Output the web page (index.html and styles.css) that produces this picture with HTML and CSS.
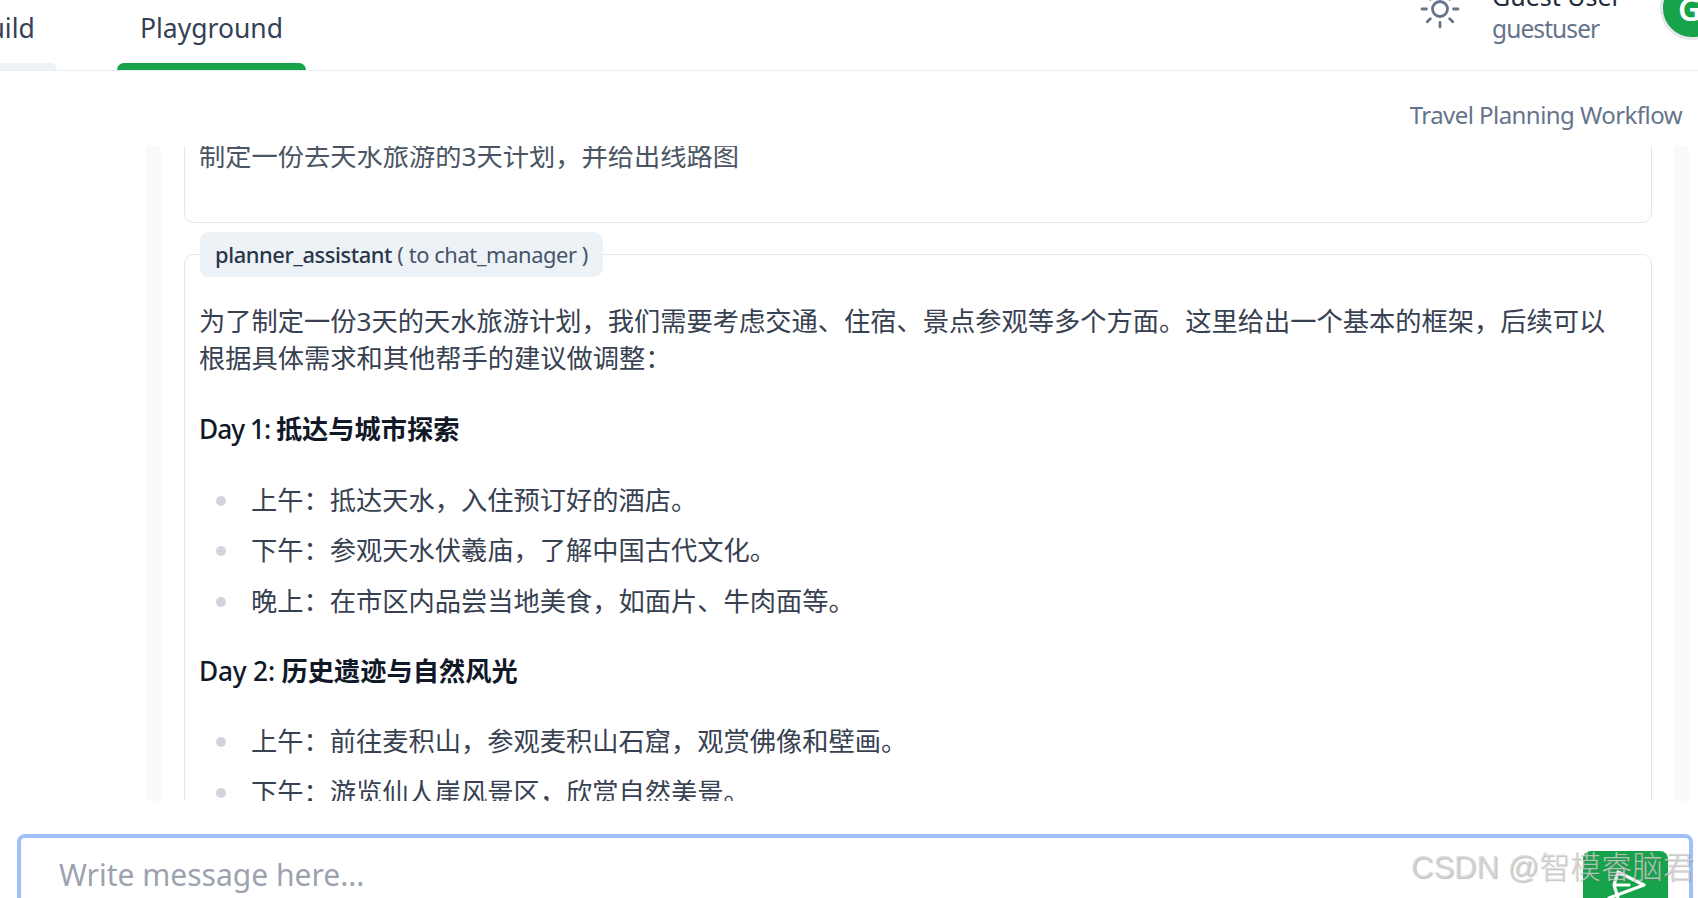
FILE: index.html
```html
<!DOCTYPE html>
<html lang="zh">
<head>
<meta charset="utf-8">
<title>Playground</title>
<link rel="stylesheet" href="styles.css">
</head>
<body>
<div class="page">
  <header class="topbar">
    <nav class="tabs">
      <div class="tab build"><span class="tab-label">Build</span><span class="tab-bar"></span></div>
      <div class="tab active"><span class="tab-label">Playground</span><span class="tab-bar"></span></div>
    </nav>
    <div class="account">
      <svg class="sun" viewBox="0 0 40 40" fill="none" stroke="#64748b" stroke-width="2.8" stroke-linecap="round">
        <circle cx="20" cy="20" r="7.5"/>
        <path d="M20 2v4.5M20 33.5V38M2 20h4.5M33.5 20H38M7.3 7.3l3 3M29.7 29.7l3 3M7.3 32.7l3-3M29.7 10.3l3-3"/>
      </svg>
      <div class="user">
        <div class="user-name">Guest User</div>
        <div class="user-handle">guestuser</div>
      </div>
      <div class="avatar">G</div>
    </div>
  </header>

  <div class="title-row">Travel Planning Workflow</div>

  <section class="chat">
    <div class="chat-inner">
      <div class="card card-user">
        <p>制定一份去天水旅游的3天计划&#xFF0C;并给出线路图</p>
      </div>
      <article class="message">
        <div class="sender"><b>planner_assistant</b> ( to chat_manager )</div>
        <div class="card card-reply">
          <p>为了制定一份3天的天水旅游计划&#xFF0C;我们需要考虑交通、住宿、景点参观等多个方面。这里给出一个基本的框架&#xFF0C;后续可以根据具体需求和其他帮手的建议做调整&#xFF1A;</p>
          <h4><span class="day day-one">Day 1: </span><strong>抵达与城市探索</strong></h4>
          <ul>
            <li>上午&#xFF1A;抵达天水&#xFF0C;入住预订好的酒店。</li>
            <li>下午&#xFF1A;参观天水伏羲庙&#xFF0C;了解中国古代文化。</li>
            <li>晚上&#xFF1A;在市区内品尝当地美食&#xFF0C;如面片、牛肉面等。</li>
          </ul>
          <h4><span class="day day-two">Day 2: </span><strong>历史遗迹与自然风光</strong></h4>
          <ul>
            <li>上午&#xFF1A;前往麦积山&#xFF0C;参观麦积山石窟&#xFF0C;观赏佛像和壁画。</li>
            <li>下午&#xFF1A;游览仙人崖风景区&#xFF0C;欣赏自然美景。</li>
          </ul>
        </div>
      </article>
    </div>
  </section>

  <footer class="composer">
    <div class="input-box">
      <span class="placeholder">Write message here...</span>
      <button class="send" type="button" aria-label="Send">
        <svg viewBox="0 0 85 47" fill="none" stroke="#fff" stroke-width="3.2" stroke-linejoin="round" stroke-linecap="round">
          <path d="M35 21 61 34 26 47M35 21l-4 13 4 13M31 34h15"/>
        </svg>
      </button>
    </div>
  </footer>

  <div class="watermark">CSDN @智模睿脑君</div>
</div>
</body>
</html>
```
FILE: styles.css
```css
* { box-sizing: border-box; }
html, body { margin: 0; padding: 0; height: 100%; background: #fff; overflow: hidden; }
body {
  font-family: "Noto Sans", "Noto Sans CJK SC", sans-serif;
  color: #374151;
}
.page { position: relative; width: 1698px; height: 898px; overflow: hidden; display: flex; flex-direction: column; }

.topbar {
  height: 71px; flex: none;
  display: flex; justify-content: space-between; align-items: flex-end;
  border-bottom: 1px solid #e8eef4;
  overflow: hidden;
}
.tabs { display: flex; gap: 60px; margin-left: -51px; }
.tab { display: flex; flex-direction: column; align-items: center; width: 108px; }
.tab.active { width: 189px; }
.tab-label { font-size: 26.5px; line-height: 36px; color: #334155; margin-bottom: 17px; }
.tab-bar { width: 100%; height: 7px; border-radius: 7px 7px 0 0; background: #edf2f7; }
.active .tab-bar { background: #16a34a; }

.account { display: flex; align-items: flex-end; height: 70px; flex: none; }
.sun { width: 40px; height: 40px; margin-bottom: 41px; margin-right: 32px; flex: none; }
.user { margin-bottom: 24px; width: 168px; }
.user-name { font-size: 25px; line-height: 32px; color: #1e293b; }
.user-handle { font-size: 24.5px; line-height: 34px; color: #64748b; letter-spacing: -0.9px; }
.avatar {
  width: 64px; height: 64px; border-radius: 50%; flex: none;
  background: #16a34a; color: #fff; font-size: 32px; font-weight: 600;
  border: 3px solid #e5e7eb;
  display: flex; align-items: center; padding-left: 15px;
  margin-bottom: 30px; margin-right: -26px;
}

.title-row {
  height: 75px; flex: none;
  padding: 27px 16px 0 0;
  text-align: right;
  font-size: 24px; line-height: 34px; color: #64748b;
  letter-spacing: -0.55px;
}

.chat {
  height: 655px; flex: none;
  margin: 0 9px 0 146px;
  background: #f9fafb;
  overflow: hidden;
}
.chat-inner {
  height: 100%;
  margin: 0 15px;
  padding: 0 22px 0 23px;
  background: #fff;
  overflow: hidden;
}
.card { border: 1px solid #e5e7eb; border-radius: 10px; background: #fff; }
.card-user {
  margin-top: -40px;
  padding: 31px 14px 47px;
  color: #4b5563;
}
.card p, .card li, .card h4 { font-size: 26.25px; line-height: 37px; margin: 0; font-weight: 400; }
.message { margin-top: 9px; }
.sender {
  position: relative;
  display: inline-block;
  height: 45px;
  margin-left: 16px; margin-bottom: -23px;
  padding: 0 15px;
  background: #edf2f7;
  border-radius: 9px;
  font-size: 21.9px; line-height: 45px;
  color: #475569;
  vertical-align: top;
  letter-spacing: -0.42px;
}
.sender b { font-weight: 500; color: #293548; }
.card-reply { padding: 48px 32px 0 14px; height: 700px; }
.card-reply p { margin-bottom: 34px; color: #374151; }
.card h4 { font-weight: 500; color: #111827; margin-bottom: 33.5px; }
.card h4 strong { font-weight: 700; }
.day-one { letter-spacing: -1px; }
.day-two { letter-spacing: -0.2px; }
.card ul { margin: 0 0 33px; padding: 0 0 0 52px; list-style: none; }
.card li { position: relative; margin-bottom: 13.7px; color: #374151; }
.card li::before {
  content: ""; position: absolute; left: -35px; top: 14px;
  width: 10px; height: 10px; border-radius: 50%; background: #d1d5db;
}

.composer {
  flex: 1;
  padding: 33px 5px 0 17px;
}
.input-box {
  position: relative;
  height: 90px;
  border: 4px solid #a0c0fb;
  border-radius: 8px;
  padding: 17px 38px;
  background: #fff;
  display: flex; justify-content: space-between; align-items: flex-start;
}
.placeholder { font-size: 30px; line-height: 40px; color: #9ca3af; }
.send {
  display: flex; align-items: flex-start;
  width: 85px; height: 60px; flex: none;
  margin: -4px -17px 0 0; padding: 0;
  border: 0; border-radius: 8px;
  background: #16a34a;
}
.send svg { display: block; width: 85px; height: 47px; }

.watermark {
  position: absolute; left: 1411px; top: 848px;
  font-family: "Liberation Sans", "Noto Sans CJK SC", sans-serif;
  font-size: 31px; line-height: 40px; white-space: nowrap;
  font-weight: 300;
  color: rgba(215, 215, 215, 0.75);
  text-shadow: 1px 1px 1px rgba(110, 110, 110, 0.45);
}
```
